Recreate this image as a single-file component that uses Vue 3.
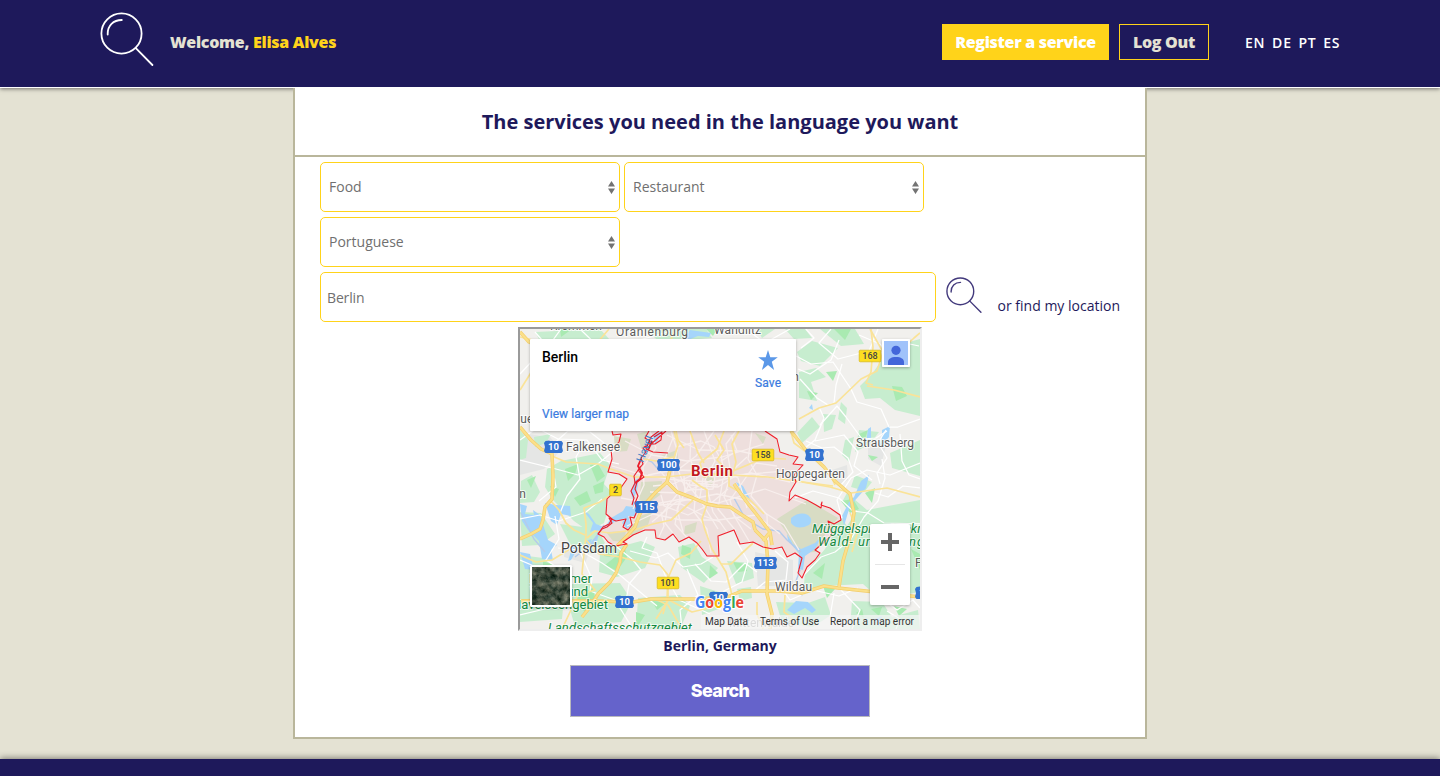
<script setup>
const languages = ['EN', 'DE', 'PT', 'ES']

const berlin =
  'M612 431L613 435L621 434L619 442L611 450L612 459L608 472L619 474L627 479L620 489L612 494L607 499L606 514L612 519L609 524L603 527L598 534L604 537L608 542L615 546L627 544L623 542L633 535L645 530L655 530L656 538L665 540L673 534L679 542L689 537L697 543L702 549L707 556L719 556L718 536L734 530L740 544L753 542L763 547L773 549L782 547L787 557L795 553L802 558L798 573L802 578L807 567L815 560L820 553L815 550L823 543L832 535L828 521L834 524L841 520L840 515L830 508L821 505L822 502L821 508L816 505L807 500L795 495L789 501L790 492L796 482L794 475L803 465L793 464L798 457L789 455L780 452L777 439L765 431'

const woods = [
  'M535 332L600 329L610 340L545 350Z', 'M644 329L706 329L712 338L660 342Z', 'M757 329L775 329L762 338Z',
  'M797 352L812 341L838 348L820 366L801 361Z', 'M799 372L816 368L826 377L811 382L817 401L799 398Z',
  'M785 329L805 329L812 338L794 339Z', 'M820 329L855 329L864 344L841 346Z',
  'M872 374L891 347L920 339L920 416L895 410L880 398L865 399L860 386Z',
  'M823 414L836 415L832 429L824 432Z', 'M797 433L812 417L820 427L802 443Z', 'M841 402L847 408L845 424L838 419Z',
  'M859 430L879 432L870 444L855 452Z', 'M890 453L920 440L920 476L892 468Z', 'M845 440L854 437L849 462L842 455Z',
  'M520 430L528 440L526 458L520 460Z', 'M534 437L551 434L546 443L535 447Z',
  'M561 461L600 453L610 465L604 484L613 494L604 523L588 531L574 521L553 500L545 487L547 469Z',
  'M521 481L532 475L540 492L534 502L520 503Z', 'M520 512L541 513L555 534L540 545L522 546Z',
  'M560 524L598 529L605 543L592 554L571 546Z', 'M600 552L641 541L655 547L645 568L617 577L599 572Z',
  'M678 547L694 543L702 557L718 568L704 583L681 567Z', 'M520 555L543 558L566 575L562 619L520 622Z',
  'M562 584L620 583L632 601L621 622L575 626Z', 'M638 598L680 595L690 606L680 629L636 629Z',
  'M727 561L752 563L754 578L736 584Z', 'M737 589L751 587L752 598L740 601Z',
  'M807 500L821 507L840 516L847 526L857 510L842 502L847 493L867 510L920 500L920 592L880 599L863 584L825 586L803 595L805 573L825 549L833 535L828 521Z',
  'M855 475L872 482L865 491L851 487Z', 'M776 602L808 603L825 597L831 615L813 627L782 623Z',
  'M852 601L882 602L892 617L918 610L920 629L850 629Z', 'M700 586L719 592L724 607L702 615Z'
]

const groves = [
  'M661 456L677 450L678 459L666 465Z', 'M641 482L662 481L660 495L645 506L639 505Z', 'M637 517L652 512L648 525L633 536L627 532Z', 'M606 532L626 531L624 542L613 541Z',
  'M777 519L807 500L838 518L826 532L816 552L798 553L786 532Z', 'M704 475L715 479L710 487Z',
  'M755 433L766 437L763 444Z', 'M637 434L648 431L643 454Z', 'M685 526L697 522L695 532L684 535Z', 'M614 436L631 439L627 451L615 452Z'
]

const greens = [
  'M560 329L572 329L561 337Z', 'M706 329L717 329L713 336Z', 'M834 329L851 329L845 340Z', 'M826 372L837 371L833 381Z',
  'M807 391L818 393L811 400Z', 'M892 386L902 387L907 396L896 401Z', 'M859 434L868 430L864 442Z', 'M868 455L878 457L872 461Z',
  'M565 469L578 464L575 474L568 481Z', 'M550 486L559 489L555 497Z', 'M590 465L598 464L605 476L597 482Z', 'M527 480L536 476L531 488Z',
  'M574 498L587 491L591 501L580 506Z', 'M593 486L604 481L603 492L595 494Z', 'M605 565L625 549L627 557L617 571Z', 'M682 545L691 548L690 559L681 554Z', 'M710 565L718 573L709 579Z', 'M733 562L746 564L747 571L738 572Z',
  'M543 561L558 567L552 576L543 572Z', 'M652 601L667 602L657 610Z', 'M575 596L593 588L597 607L584 611Z', 'M636 612L645 615L636 629Z', 'M604 545L617 548L610 557L604 556Z',
  'M813 573L825 563L822 579Z', 'M823 586L835 589L827 598Z', 'M865 493L875 488L872 503Z', 'M841 501L853 499L859 509L850 513Z',
  'M871 609L882 607L879 616Z', 'M856 613L862 609L864 618Z', 'M894 606L907 609L899 616Z', 'M911 549L920 554L920 570Z'
]

const waters = [
  'M520 504L527 506L525 514L534 515L533 510L540 515L548 540L557 545L551 550L553 560L542 559L539 541L528 530L522 521Z',
  'M520 552L530 554L534 570L525 569Z', 'M545 503L556 505L570 506L571 516L561 514L557 525L551 521Z',
  'M611 518L623 511L626 506L633 507L633 499L637 505L636 516L628 516L631 525L627 529L622 523L625 518L616 521L603 529L607 524Z',
  'M583 510L589 514L596 524L604 527L599 535L595 530L590 532L593 523Z', 'M591 542L600 531L596 544L587 548Z',
  'M568 561L573 545L578 548L571 560ZM585 541L592 539L589 547Z', 'M791 518Q800 511 808 515Q814 520 809 525Q797 531 791 523Z',
  'M787 534L793 544L801 549L815 543L822 536L815 549L805 556L803 570L798 569L799 553L788 541Z',
  'M796 601L808 602L816 610L812 613L805 608L794 614L787 610Z', 'M882 430L890 426L889 437L880 447L882 437Z',
  'M868 429L871 427L871 438L866 444Z', 'M854 497L861 481L869 475L866 488L850 506L844 526L842 516L849 502Z',
  'M887 543L889 552L883 547Z', 'M635 480L639 478L637 490L633 500L631 493Z', 'M809 408L812 404L813 410Z', 'M874 619L882 616L879 627Z',
  'M690 330L711 333L709 337L698 336L688 340L686 336Z', 'M736 482L743 486L750 499L746 498L740 489Z', 'M652 436L662 431L657 442L650 447Z'
]

const lanes = [
  'M520 374L534 359L547 357L558 350L594 352', 'M535 332L548 347L561 329M580 329L606 354L643 339L672 331',
  'M520 440L537 428L558 439L587 440L602 460L619 464', 'M520 460L556 469L578 475L599 463L615 450',
  'M520 519L540 515L559 521L586 512L602 499', 'M551 446L568 431L590 432L604 443', 'M584 443L576 457L580 479L567 496L560 513',
  'M539 501L556 487L553 470M555 516L559 539L546 560L566 573', 'M558 548L579 550L602 563L621 576L640 592L657 606',
  'M578 547L592 579L590 591L615 600L633 629', 'M617 547L633 560L641 570L629 584L626 601', 'M520 560L541 569L557 589L549 608L520 615',
  'M647 537L642 548L657 553L665 575L679 600L710 614', 'M630 551L656 558L668 553L683 567L701 564L713 557',
  'M687 569L698 595L680 610L682 629', 'M695 564L711 581L726 582L745 563L757 572', 'M737 542L748 561L742 582L724 591L720 610',
  'M775 551L788 562L786 580L765 582L754 591M778 583L790 600L813 590L839 596L858 588',
  'M803 576L821 557L835 552L851 539L864 517L878 501L885 478L882 459', 'M834 593L830 617L843 629M841 590L860 610L852 629',
  'M886 430L878 443L887 458L877 473L880 484M920 419L898 427L889 427L881 409L857 402L851 389L833 362L811 364L796 356',
  'M831 329L819 343L838 359L869 351L878 329M839 340L831 360L810 374L798 369', 'M800 379L817 398L828 405L834 403L836 385L842 364',
  'M801 348L814 338L806 329M859 335L880 344L890 354L905 343L919 346', 'M820 425L837 406L846 417L862 439L876 438L887 431',
  'M805 448L815 440L824 418L819 407M815 441L844 435L858 452L854 466L872 480', 'M839 487L853 472L848 458L834 447L822 448L806 441',
  'M795 498L813 491L839 498L853 511L868 513L884 523L920 524', 'M842 518L837 500L851 478L867 470L890 475L920 463',
  'M746 329L765 343L790 329M900 434L902 461L909 475L920 479M875 493L888 497L903 486L920 488',
  'M885 601L897 610L913 600L920 608M887 611L900 619L896 629'
]

const streets = [
  'M625 441L652 455L687 461L722 457L764 444', 'M612 466L643 475L676 480L712 482L751 473L790 482',
  'M621 498L655 504L682 499L718 503L765 489L806 504', 'M627 526L653 514L681 520L718 520L756 515L780 534',
  'M650 431L656 448L643 467L644 485L633 509', 'M671 431L677 450L673 475L680 498L675 524L690 541',
  'M691 431L690 459L697 475L694 512L707 529L711 553', 'M704 431L715 461L705 480L713 512L729 535',
  'M736 431L726 444L731 474L724 497L736 519L752 546', 'M752 431L748 459L757 475L751 496L767 515L768 547',
  'M652 522L676 502L717 494L745 500L784 525L799 550', 'M667 435L699 450L739 451L771 458', 'M666 475L690 485L718 487L737 475L786 471',
  'M673 438L660 471L679 492L661 515M690 482L677 509L683 532', 'M714 431L696 456L679 469L648 475',
  'M718 529L700 500L686 482M736 531L718 509L723 479L747 457', 'M777 466L756 463L742 483L730 500L734 516L751 529',
  'M653 486L673 484L697 473L725 469M650 492L683 493L712 480', 'M661 495L664 506L688 515L709 505L728 489', 'M678 470L700 471L715 476L713 489L686 490Z',
  'M731 435L737 451L721 461M719 438L723 469L738 478L747 508', 'M676 447L701 441L714 447L719 456',
  'M659 505L681 504L704 516L720 522M661 512L664 526L659 537M668 503L665 523L676 537', 'M684 476L685 493L692 501M703 478L700 497M692 483L718 485'
]

const minors = [
  'M552 456L566 462L598 464L608 468L634 477L667 477L700 473L731 475L768 477L788 480L833 486',
  'M533 340L520 337M609 329L597 343L578 356L568 370M675 329L670 342', 'M550 500L559 510L566 523L574 530L585 535',
  'M532 371L520 390', 'M609 496L600 502L584 508L586 524L586 535', 'M520 555L536 562L552 560L570 549',
  'M586 535L583 563L582 574L595 590L578 595L562 629', 'M587 538L595 531L610 533L634 530L653 524L671 520L682 510L693 500',
  'M586 540L599 554L620 557L640 562L660 565L668 575L667 600L663 614', 'M692 480L700 486L707 490L707 504L702 519L705 530L712 549L726 572L732 595',
  'M656 619L668 601L668 578L676 560L691 553L701 541', 'M653 598L668 605L682 629M669 600L692 612L721 605',
  'M715 435L724 450L717 460L729 472L729 486L738 491L751 501L764 514', 'M721 564L731 564L741 554L753 543',
  'M674 431L678 445L673 461L668 475', 'M739 431L732 444L736 462L732 477',
  'M791 432L794 443L813 457L829 472L835 485', 'M799 419L819 408L836 403L861 379L877 371L883 352L870 329',
  'M867 386L874 387L894 390L920 397', 'M873 385L866 383L871 372L873 347L871 329',
  'M802 482L830 487L851 493L887 488L920 497', 'M757 602L757 614L763 629M785 595L784 612L791 617L790 629',
  'M920 333L914 338L897 354', 'M850 513L858 531L852 552', 'M724 431L717 449L700 463L704 477L733 471L764 458L786 459',
  'M676 431L678 440L684 448M690 431L698 453L704 463', 'M644 459L656 461L673 457'
]

const motorways = [
  'M520 427L531 440L541 449L552 454L553 477L552 499L545 507L543 520L540 529L531 534L520 539',
  'M520 601L550 600L570 601L596 601L633 602L651 599L667 599L697 599L727 597L742 591L778 591L802 593L824 586L838 588L875 592L920 597',
  'M627 544L621 553L620 562L616 573L610 582L598 594L590 607L582 617',
  'M617 546L626 537L635 527L639 516L645 504L656 492L667 482L670 470L668 461',
  'M791 431L805 449L824 467L835 481L850 494L854 513L850 537L843 561L839 587', 'M755 530L766 541L768 563L767 594L772 614L770 629',
  'M667 482L677 492L693 498L707 504L717 506L730 507L742 515L753 522L755 530', 'M520 332L529 342L544 349',
  'M734 484L746 501L757 515L770 532L772 545', 'M763 541L770 532'
]

const shields = [
  { n: '10', x: 553.5, y: 447 }, { n: '100', x: 668.5, y: 465 }, { n: '115', x: 646.5, y: 507 },
  { n: '10', x: 814.5, y: 455 }, { n: '113', x: 765.5, y: 563 }, { n: '10', x: 624.5, y: 602 },
  { n: '10', x: 718.5, y: 598 }, { n: '10', x: 924.5, y: 593 }
]
const plates = [
  { n: '168', x: 870, y: 356 }, { n: '158', x: 763, y: 455 }, { n: '2', x: 615.5, y: 490 }, { n: '101', x: 668, y: 583 }
]
const places = [
  { t: 'Kremmen', x: 550, y: 330, w: 52 }, { t: 'Oranienburg', x: 616, y: 335.5, w: 72 }, { t: 'Wandlitz', x: 714, y: 333.5, w: 47 },
  { t: 'Falkensee', x: 566, y: 450.5, w: 54 }, { t: 'Strausberg', x: 856, y: 447, w: 58 }, { t: 'Hoppegarten', x: 776, y: 478, w: 69 },
  { t: 'Wildau', x: 775, y: 591, w: 37 }, { t: 'Nauen', x: 505, y: 423, w: 35 }, { t: 'Bernau bei Berlin', x: 707, y: 381, w: 92 },
  { t: 'Ketzin', x: 490, y: 498, w: 36 }, { t: 'Fürstenwalde', x: 915, y: 567, w: 72 }
]
</script>

<template>
  <div class="page">
    <header class="header">
      <svg class="logo" viewBox="0 0 54 54">
        <g fill="none" stroke="currentColor" stroke-width="1.8" stroke-linecap="round">
          <circle cx="21.5" cy="21.5" r="20.1" /><path d="M7.7 22.5C7.4 13.4 13.4 8.1 21.8 8M35.8 36.2L52.4 53" />
        </g>
      </svg>
      <div class="welcome">Welcome, <span>Elisa Alves</span></div>
      <nav class="nav">
        <button class="btn register">Register a service</button>
        <button class="btn logout">Log Out</button>
        <div class="langs"><a v-for="l in languages" :key="l">{{ l }}</a></div>
      </nav>
    </header>

    <main class="main">
      <section class="panel">
        <h1 class="title">The services you need in the language you want</h1>
        <form class="form" @submit.prevent>
          <div class="row">
            <div v-for="o in ['Food', 'Restaurant']" :key="o" class="select">
              <span>{{ o }}</span><svg viewBox="0 0 7 13"><path d="M0 5.4L3.5 0L7 5.4ZM0 7.6H7L3.5 13Z" fill="#737373" /></svg>
            </div>
          </div>
          <div class="row">
            <div class="select">
              <span>Portuguese</span><svg viewBox="0 0 7 13"><path d="M0 5.4L3.5 0L7 5.4ZM0 7.6H7L3.5 13Z" fill="#737373" /></svg>
            </div>
          </div>
          <div class="row">
            <div class="input">Berlin</div>
            <svg class="find" viewBox="0 0 54 54">
              <g fill="none" stroke="currentColor" stroke-width="2.1" stroke-linecap="round">
                <circle cx="21.5" cy="21.5" r="20.1" /><path d="M7.7 22.5C7.4 13.4 13.4 8.1 21.8 8M35.8 36.2L52.4 53" />
              </g>
            </svg>
            <span class="locate">or find my location</span>
          </div>

          <div class="map">
            <svg viewBox="520 329 400 300" width="400" height="300">
              <defs>
                <clipPath id="city"><path :d="berlin" /></clipPath>
                <filter id="lift" x="-20%" y="-20%" width="140%" height="150%"><feDropShadow dx="0" dy="1" stdDeviation="1.5" flood-opacity=".3" /></filter>
                <filter id="aerial" x="0" y="0" width="100%" height="100%" color-interpolation-filters="sRGB">
                  <feTurbulence type="fractalNoise" baseFrequency=".16" numOctaves="4" seed="8" />
                  <feColorMatrix values=".6 .3 0 0 -.2  .5 .3 0 0 -.1  .45 .3 0 0 -.13  0 0 0 0 1" />
                </filter>
              </defs>
              <rect x="520" y="329" width="400" height="300" fill="#f1f0ed" />
              <path d="M520 433L550 437L561 450L544 469L520 475ZM565 546L590 551L585 563L564 557ZM755 552L793 560L793 586L758 586ZM832 470L847 465L848 480L838 486ZM868 440L886 445L881 466L868 459Z" fill="#e5e6e5" />
              <path v-for="(d, i) in woods" :key="'w' + i" :d="d" fill="#c7edcf" />
              <path v-for="(d, i) in greens" :key="'g' + i" :d="d" fill="#a9eab1" />
              <path :d="berlin" fill="#eedfdd" />
              <path v-for="(d, i) in groves" :key="'v' + i" :d="d" fill="#d8dcc4" />
              <path v-for="(d, i) in waters" :key="'a' + i" :d="d" fill="#a5d5fb" />
              <g fill="none" stroke="#b5cbea" stroke-width="1.4">
                <path d="M643 458L652 462L657 468M734 498L745 518L763 529L779 531L787 540L801 552M604 525L591 545L575 557M521 513L534 539L545 552M800 570L796 581L802 596" />
              </g>
              <g class="line">
                <path v-for="(d, i) in lanes" :key="'l' + i" :d="d" stroke="#fff" stroke-width="1.25" />
                <g clip-path="url(#city)">
                  <path v-for="(d, i) in streets" :key="'s' + i" :d="d" stroke="#f8efed" stroke-width="1.3" />
                </g>
                <path v-for="(d, i) in minors" :key="'m' + i" :d="d" stroke="#fae398" stroke-width="1.7" />
                <path v-for="(d, i) in motorways" :key="'ma' + i" :d="d" stroke="#f4ce6c" stroke-width="3.5" />
                <path v-for="(d, i) in motorways" :key="'mb' + i" :d="d" stroke="#fbe08a" stroke-width="2.2" />
                <path :d="berlin" stroke="#f01d29" stroke-width="1.05" />
                <path stroke="#e91e2c" stroke-width="1.1" d="M649 431L645 438L651 442L643 448L646 452L641 458L643 464L638 470L644 477L637 482L635 489L638 496L635 503L637 511L634 518L630 517L632 525L628 530L623 527L626 519L616 521L609 518L612 523L607 527L602 529L598 534M659 431L651 437L646 449L653 452L668 453M654 437L662 432L661 440L655 444L651 444L666 431M641 466L634 476L635 483L631 491L634 498L632 505" />
                <path stroke="#e91e2c" stroke-width="1.9" d="M641 459L638 466L642 473L640 479L635 483M652 441L648 450" />
              </g>

              <g v-for="(s, i) in shields" :key="'sh' + i" :transform="`translate(${s.x} ${s.y})`">
                <path v-if="s.n.length === 2" d="M-4 -6.5L-4 -6H8L9.5 -4L8.5 0L9.5 4L8 6H-8L-9.5 4L-8.5 0L-9.5 -4L-8 -6Z" fill="#3272cf" />
                <path v-else d="M-10 -6H10L11.5 -4L10.5 0L11.5 4L10 6H-10L-11.5 4L-10.5 0L-11.5 -4Z" fill="#3272cf" />
                <text class="shield" y="3.4">{{ s.n }}</text>
              </g>
              <g v-for="p in plates" :key="'p' + p.n" :transform="`translate(${p.x} ${p.y})`">
                <rect :x="p.n.length > 1 ? -10.8 : -5.8" y="-5.8" :width="p.n.length > 1 ? 21.6 : 11.6" height="11.6" rx="1" fill="#fdde20" stroke="#d6b514" stroke-width=".7" />
                <text class="plate" y="3.2">{{ p.n }}</text>
              </g>

              <text v-for="p in places" :key="p.t" class="place" :x="p.x" :y="p.y" :textLength="p.w">{{ p.t }}</text>
              <text class="place town" x="561" y="553" textLength="56">Potsdam</text>
              <text class="capital" x="691" y="476" textLength="42">Berlin</text>
              <text class="river" transform="translate(643 463) rotate(-68)">Havel</text>
              <g class="park">
                <text x="529" y="583" textLength="63">Potsdamer</text>
                <text x="530" y="596" textLength="58">Wald- und</text>
                <text x="512" y="609" textLength="96">Havelseengebiet</text>
                <g font-style="italic">
                  <text x="548" y="631.5" textLength="144">Landschaftsschutzgebiet</text>
                  <text x="812" y="532.5" textLength="137">Müggelspree-Löcknitzer</text>
                  <text x="818" y="545.5" textLength="138">Wald- und Seengebiet</text>
                </g>
              </g>
              <text class="place" x="729" y="627" textLength="65" opacity=".6">Mittenwalde</text>
              <rect x="701" y="615" width="219" height="14" fill="#f5f5f5" opacity=".72" />
              <g class="legal">
                <text x="705" y="625" textLength="43">Map Data</text>
                <text x="760" y="625" textLength="59">Terms of Use</text>
                <text x="830" y="625" textLength="84">Report a map error</text>
              </g>
              <text class="google" x="695" y="608" textLength="49" lengthAdjust="spacingAndGlyphs"><tspan fill="#4285f4">G</tspan><tspan fill="#ea4335">o</tspan><tspan fill="#fbbc05">o</tspan><tspan fill="#4285f4">g</tspan><tspan fill="#34a853">l</tspan><tspan fill="#ea4335">e</tspan></text>

              <rect x="530" y="339" width="266" height="92" rx="1" fill="#fff" filter="url(#lift)" />
              <text class="card-name" x="542" y="361.5" textLength="36">Berlin</text>
              <text class="card-link" x="542" y="418" textLength="87">View larger map</text>
              <text class="card-link" x="755" y="387" textLength="26">Save</text>
              <path d="M768 350L770.3 357.2H777.8L771.8 361.7L774.1 370L768 365L761.9 370L764.2 361.7L758.2 357.2H765.7Z" fill="#5b98e8" />

              <g filter="url(#lift)"><rect x="882" y="339" width="28" height="28" rx="1" fill="#fff" /></g>
              <rect x="884" y="341" width="24" height="24" fill="#a0c2fa" />
              <circle cx="896" cy="350.3" r="4.6" fill="#4366da" />
              <path d="M888 365V362C888 359 891 357 896 357S904 359 904 362V365Z" fill="#4366da" />

              <rect x="530" y="565" width="42" height="42" rx="1.5" fill="#fff" filter="url(#lift)" />
              <rect x="532" y="567" width="38" height="38" filter="url(#aerial)" />

              <rect x="870" y="524" width="40" height="81" rx="2" fill="#fff" filter="url(#lift)" />
              <path d="M875 564.5H905" stroke="#e6e6e6" />
              <path d="M881 542H899M890 533V551M881 587H899" stroke="#666" stroke-width="4" />
            </svg>
          </div>

          <p class="result">Berlin, Germany</p>
          <button class="search">Search</button>
        </form>
      </section>
    </main>
    <footer class="footer"></footer>
  </div>
</template>

<style>
body { margin: 0; overflow: hidden; }
</style>

<style scoped>
* { box-sizing: border-box; }
.page { height: 776px; display: flex; flex-direction: column; background: #e4e2d3; color: #1e195b; font-family: 'Open Sans', sans-serif; }
.header { flex: none; height: 88px; padding: 0 100px; display: flex; align-items: center; background: #1e195b; border-bottom: 1px solid #fff; box-shadow: 0 1px 4px rgba(0, 0, 0, .5); }
.logo { width: 54px; height: 54px; margin: -9px 16px 0 0; color: #fff; }
.welcome { margin-top: -3px; font-size: 16px; font-weight: 800; letter-spacing: -.28px; color: #e4e2d3; white-space: pre; }
.welcome span { color: #ffd31a; }
.nav { margin: -3px 0 0 auto; display: flex; align-items: center; }
.btn { height: 36px; padding: 0; border: 1px solid #ffd31a; font: 800 16px 'Open Sans', sans-serif; letter-spacing: -.3px; }
.register { width: 167px; background: #ffd31a; color: #fff; }
.logout { width: 90px; margin-left: 10px; background: none; color: #e4e2d3; }
.langs { width: 95px; margin-left: 36px; padding-top: 1px; display: flex; justify-content: space-between; color: #fff; font-size: 14px; font-weight: 600; letter-spacing: .8px; }
.langs a:last-child { letter-spacing: .6px; }
.main { flex: none; height: 671px; display: flex; justify-content: center; align-items: flex-start; }
.panel { position: relative; width: 854px; height: 651px; background: #fff; border: 2px solid #b9b69b; border-top: 0; }
.title { height: 69px; margin: 0; border-bottom: 2px solid #b9b69b; text-align: center; font-size: 20px; font-weight: 700; line-height: 67px; }
.form { padding: 5px 25px 0; display: flex; flex-direction: column; }
.row { height: 50px; margin-bottom: 5px; display: flex; gap: 4px; }
.select, .input { height: 50px; border: 1px solid #ffd31a; border-radius: 5px; color: #707070; font-size: 14px; }
.select { width: 300px; padding: 0 4px 0 8px; display: flex; align-items: center; justify-content: space-between; }
.select span { padding-bottom: 2px; }
.select svg { width: 7px; height: 13px; }
.input { width: 616px; padding-left: 6px; line-height: 50px; letter-spacing: -.15px; }
.find { width: 36px; height: 36px; margin: 5px 0 0 6px; color: #42397c; }
.locate { margin: 24px 0 0 12px; font-size: 14px; line-height: 20px; white-space: nowrap; }
.map { width: 404px; height: 304px; align-self: center; border: 2px solid; border-color: #9a9a9a #eee #eee #9a9a9a; overflow: hidden; }
.map svg { display: block; font-family: Roboto, sans-serif; }
.line { fill: none; stroke-linejoin: round; }
.shield { fill: #fff; font-size: 9.5px; font-weight: 700; text-anchor: middle; }
.plate { fill: #444; font-size: 9px; font-weight: 500; text-anchor: middle; }
.place { fill: #5b5b5b; stroke: rgba(255, 255, 255, .8); stroke-width: 2px; paint-order: stroke; font-size: 12px; }
.town { fill: #444; font-size: 14px; }
.capital { fill: #c2181f; stroke: rgba(255, 255, 255, .7); stroke-width: 2px; paint-order: stroke; font-size: 15px; font-weight: 700; }
.river { fill: #4083c8; font-size: 11px; }
.park { fill: #14883f; stroke: rgba(255, 255, 255, .65); stroke-width: 2px; paint-order: stroke; font-size: 13px; }
.legal { fill: #333; font-size: 10px; }
.google { stroke: #fff; stroke-width: 2px; paint-order: stroke; font-family: 'Open Sans', sans-serif; font-size: 16px; font-weight: 700; }
.card-name { fill: #000; font-size: 14px; font-weight: 500; }
.card-link { fill: #3a7be0; stroke: #3a7be0; stroke-width: .2px; font-size: 12px; }
.result { margin: 5px 0 0; text-align: center; font-size: 14px; font-weight: 700; line-height: 20px; }
.search { width: 300px; height: 52px; margin-top: 9px; padding: 0 0 2px; align-self: center; background: #6563cb; border: 1px solid #b9b9bd; color: #fff; font: 800 18px Inter, sans-serif; letter-spacing: -.7px; }
.footer { flex: none; height: 17px; background: #1e195b; box-shadow: 0 -1px 6px rgba(0, 0, 0, .45); }
</style>
